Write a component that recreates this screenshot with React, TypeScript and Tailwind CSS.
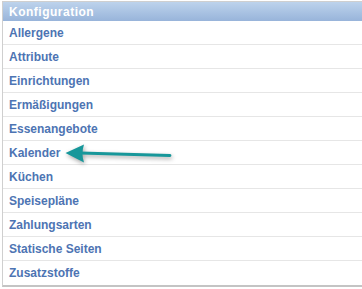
import React from "react";

const items = [
  "Allergene",
  "Attribute",
  "Einrichtungen",
  "Ermäßigungen",
  "Essenangebote",
  "Kalender",
  "Küchen",
  "Speisepläne",
  "Zahlungsarten",
  "Statische Seiten",
  "Zusatzstoffe",
];

export default function App() {
  return (
    <div className="relative w-[362px] h-[289px] overflow-hidden bg-white" style={{ fontFamily: '"Liberation Sans", Arial, sans-serif' }}>
      <div className="ml-[2px] mt-[1px] w-[380px] border-t border-l border-b border-[#cfcfcf] border-b-[#c4c4c4] border-b-2">
        <div className="h-[19px] bg-gradient-to-b from-[#bdd3ec] to-[#98b4da] pl-[6px] flex items-center">
          <span className="text-white font-bold text-[12px] tracking-[0.5px] leading-none">Konfiguration</span>
        </div>
        {items.map((it, i) => (
          <div
            key={it}
            className={`h-[24px] pl-[6px] flex items-center ${i < items.length - 1 ? "border-b border-[#e6e6e6]" : ""}`}
          >
            <span className="text-[#4d74b3] font-bold text-[12px] leading-none">{it}</span>
          </div>
        ))}
      </div>
      <svg
        className="absolute left-[60px] top-[138px]"
        width="125"
        height="32"
        viewBox="0 0 125 32"
        style={{ filter: "drop-shadow(1px 2px 2px rgba(0,0,0,0.35))" }}
      >
        <path d="M20 15 L110 17.5" stroke="#17979a" strokeWidth="2.8" strokeLinecap="round" fill="none" />
        <path d="M5.5 15 L24 6.5 Q21 15.5 24 24.5 Z" fill="#17979a" />
      </svg>
    </div>
  );
}
